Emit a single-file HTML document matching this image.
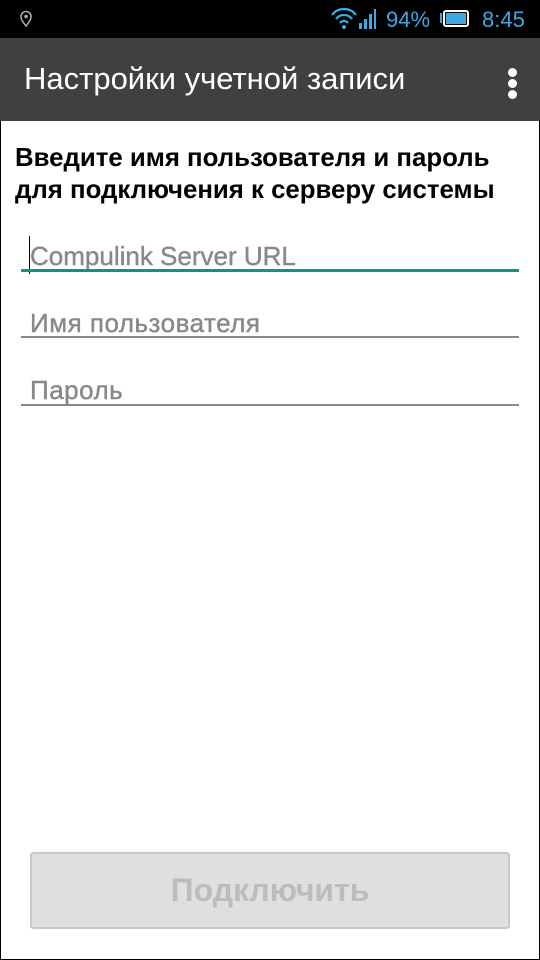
<!DOCTYPE html>
<html><head><meta charset="utf-8"><style>
*{margin:0;padding:0;box-sizing:border-box}
body{width:540px;height:960px;background:#000;font-family:"Liberation Sans","DejaVu Sans",sans-serif;position:relative;overflow:hidden}
.abs{position:absolute}
.main{left:1px;top:121px;width:538px;height:838px;background:#fff}
.bar{left:0;top:38px;width:540px;height:83px;background:#404040}
.ph{font-size:26px;color:#888;line-height:30px;-webkit-text-stroke:0.4px #888}
</style></head><body>
<div class="abs bar"></div>
<div class="abs main"></div>
<svg class="abs" style="left:19px;top:10px" width="14" height="18" viewBox="0 0 14 18"><path d="M7 16 C3 11 2 9 2 6.5 A5 5 0 0 1 12 6.5 C12 9 11 11 7 16Z" fill="none" stroke="#aaa" stroke-width="1.6"/><circle cx="7" cy="6.5" r="1.8" fill="#aaa"/></svg>
<svg class="abs" style="left:330px;top:7px" width="50" height="24" viewBox="0 0 50 24"><path d="M2 8 A15 15 0 0 1 26 8" fill="none" stroke="#3ca9e0" stroke-width="2.2"/><path d="M6 12 A10 10 0 0 1 22 12" fill="none" stroke="#3ca9e0" stroke-width="2.2"/><path d="M10 16 A5 5 0 0 1 18 16" fill="none" stroke="#3ca9e0" stroke-width="2.2"/><circle cx="14" cy="20" r="2" fill="#3ca9e0"/><rect x="29" y="16" width="3" height="6" fill="#3ca9e0"/><rect x="34" y="12" width="3" height="10" fill="#3ca9e0"/><rect x="39" y="7" width="3" height="15" fill="#3ca9e0"/><rect x="44" y="2" width="2" height="20" fill="#3ca9e0"/></svg>
<div class="abs" style="left:386px;top:7px;font-size:22px;color:#3ca9e0">94%</div>
<svg class="abs" style="left:440px;top:9px" width="30" height="20" viewBox="0 0 30 20"><rect x="0" y="4" width="2" height="10" fill="#3ca9e0"/><rect x="4" y="2" width="24" height="15" rx="2" fill="none" stroke="#fff" stroke-width="2"/><rect x="6" y="4" width="20" height="11" fill="#3ca9e0"/></svg>
<div class="abs" style="left:482px;top:7px;font-size:22px;color:#3ca9e0">8:45</div>
<div class="abs" style="left:24px;top:61px;font-size:31px;color:#fff;line-height:36px">Настройки учетной записи</div>
<div class="abs" style="left:508px;top:68px;width:9px;height:9px;border-radius:50%;background:#fff"></div>
<div class="abs" style="left:508px;top:79px;width:9px;height:9px;border-radius:50%;background:#fff"></div>
<div class="abs" style="left:508px;top:90px;width:9px;height:9px;border-radius:50%;background:#fff"></div>
<div class="abs" style="left:15px;top:142px;font-size:25.8px;font-weight:bold;line-height:32px;color:#000">Введите имя пользователя и пароль<br>для подключения к серверу системы</div>
<div class="abs" style="left:29px;top:236px;width:1px;height:38px;background:#000"></div>
<div class="abs ph" style="left:30px;top:241px">Compulink Server URL</div>
<div class="abs" style="left:21px;top:269px;width:498px;height:3px;background:#0e9484"></div>
<div class="abs ph" style="left:30px;top:308px;letter-spacing:0.5px">Имя пользователя</div>
<div class="abs" style="left:21px;top:336px;width:498px;height:2px;background:#888"></div>
<div class="abs ph" style="left:30px;top:375px;letter-spacing:0.5px">Пароль</div>
<div class="abs" style="left:21px;top:404px;width:498px;height:2px;background:#888"></div>
<div class="abs" style="left:30px;top:852px;width:480px;height:77px;background:#dfdfdf;border:2px solid #c8c8c8;border-radius:3px;text-align:center;line-height:73px;font-size:32px;font-weight:bold;color:#bcbcbc">Подключить</div>
</body></html>
